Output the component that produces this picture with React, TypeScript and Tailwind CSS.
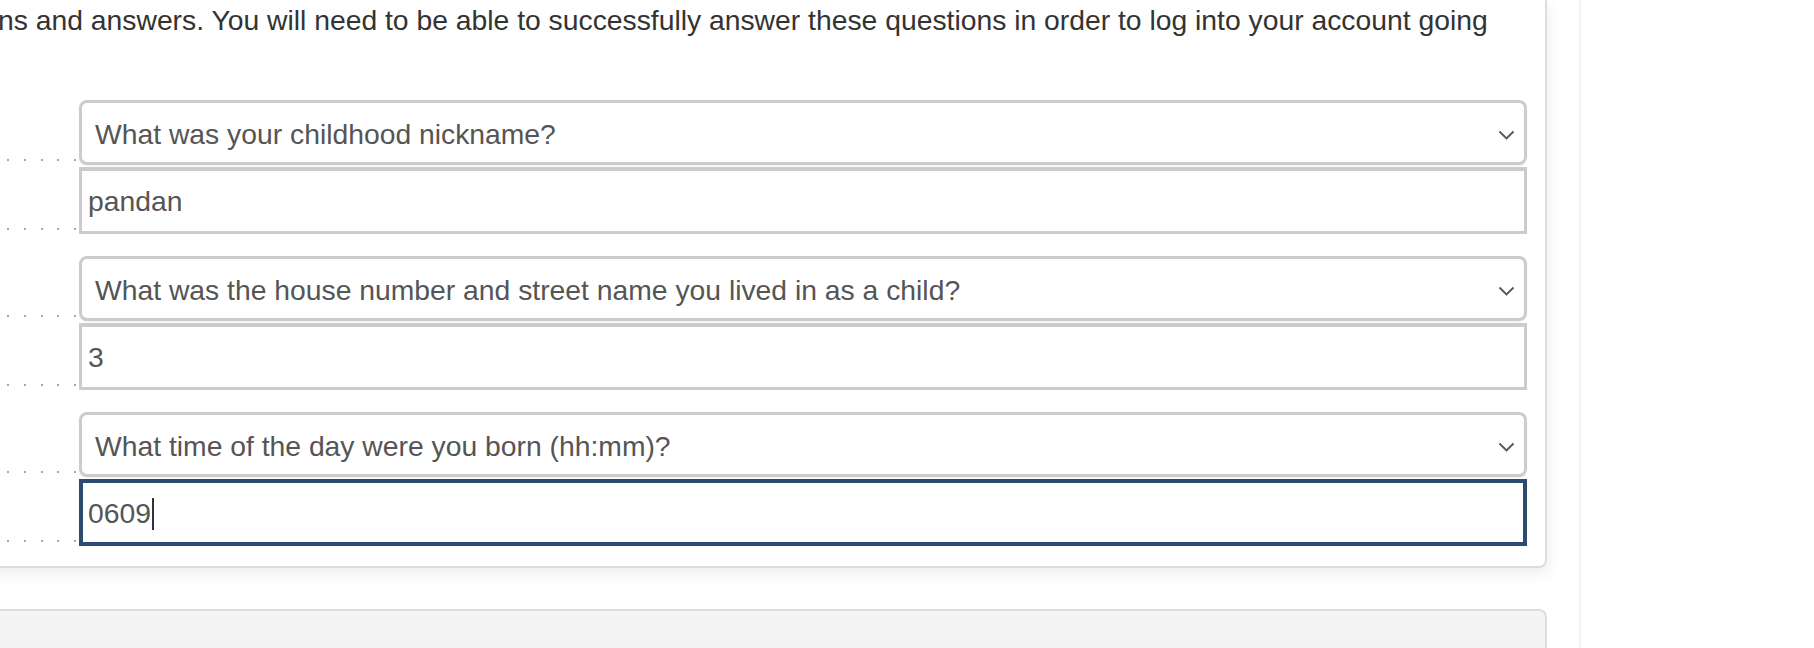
const QUESTIONS = [
  { question: "What was your childhood nickname?", answer: "pandan", focused: false },
  { question: "What was the house number and street name you lived in as a child?", answer: "3", focused: false },
  { question: "What time of the day were you born (hh:mm)?", answer: "0609", focused: true },
];

function Leader() {
  return (
    <div className="flex w-[77px] shrink-0 items-end pb-[4px] pl-[5px] pr-[3px]">
      <div className="flex w-full justify-between">
        {[0, 1, 2, 3, 4].map((i) => (
          <span key={i} className="h-[2px] w-[2px] rounded-full bg-[#8a8a8a]" />
        ))}
      </div>
    </div>
  );
}

function Chevron() {
  return (
    <svg width="17" height="10" viewBox="0 0 17 10" className="mt-[1px] shrink-0">
      <path d="M1.5 1.5 L8.5 8.5 L15.5 1.5" fill="none" stroke="#555" strokeWidth="1.8" />
    </svg>
  );
}

function QuestionGroup({ question, answer, focused }: { question: string; answer: string; focused: boolean }) {
  return (
    <div className="flex flex-col gap-[2px]">
      <div className="flex">
        <Leader />
        <div className="flex h-[65px] flex-1 items-center justify-between rounded-[8px] border-[3px] border-[#ccc] bg-white pl-[13px] pr-[9px] pt-[4px] shadow-[0_1px_2px_rgba(0,0,0,0.06)]">
          <span className="text-[28.3px] text-[#555]">{question}</span>
          <Chevron />
        </div>
      </div>
      <div className="flex">
        <Leader />
        {focused ? (
          <div className="flex h-[67px] flex-1 items-center border-[4px] border-[#2d4b6e] bg-white pl-[5px] pt-[2px]">
            <span className="text-[28.3px] text-[#555]">{answer}</span>
            <span className="ml-[1px] h-[32px] w-[2px] bg-[#333]" />
          </div>
        ) : (
          <div className="flex h-[67px] flex-1 items-center border-[3px] border-t-[4px] border-[#ccc] bg-white pl-[6px]">
            <span className="text-[28.3px] text-[#555]">{answer}</span>
          </div>
        )}
      </div>
    </div>
  );
}

export default function App() {
  return (
    <div
      className="flex h-[648px] w-[1814px] overflow-hidden bg-white"
      style={{ fontFamily: '"Liberation Sans", Arial, Helvetica, sans-serif' }}
    >
      <div className="-ml-[20px] flex w-[1567px] shrink-0 flex-col">
        <div className="rounded-b-[8px] border-2 border-t-0 border-[#ddd] bg-white pb-[20px] pl-[20px] pr-[18px] shadow-[2px_6px_14px_rgba(0,0,0,0.07)]">
          <p className="-ml-[4px] whitespace-nowrap text-[28.3px] leading-[40px] text-[#333]">
            ns and answers. You will need to be able to successfully answer these questions in order to log into your account going
          </p>
          <div className="mt-[60px] flex flex-col gap-[22px]">
            {QUESTIONS.map((q) => (
              <QuestionGroup key={q.question} {...q} />
            ))}
          </div>
        </div>
        <div className="mt-[41px] h-[60px] rounded-t-[8px] border-2 border-b-0 border-[#ddd] bg-[#f4f4f4]" />
      </div>
      <div className="w-[32px] shrink-0" />
      <div className="w-[2px] shrink-0 bg-[#f2f2f2]" />
    </div>
  );
}
